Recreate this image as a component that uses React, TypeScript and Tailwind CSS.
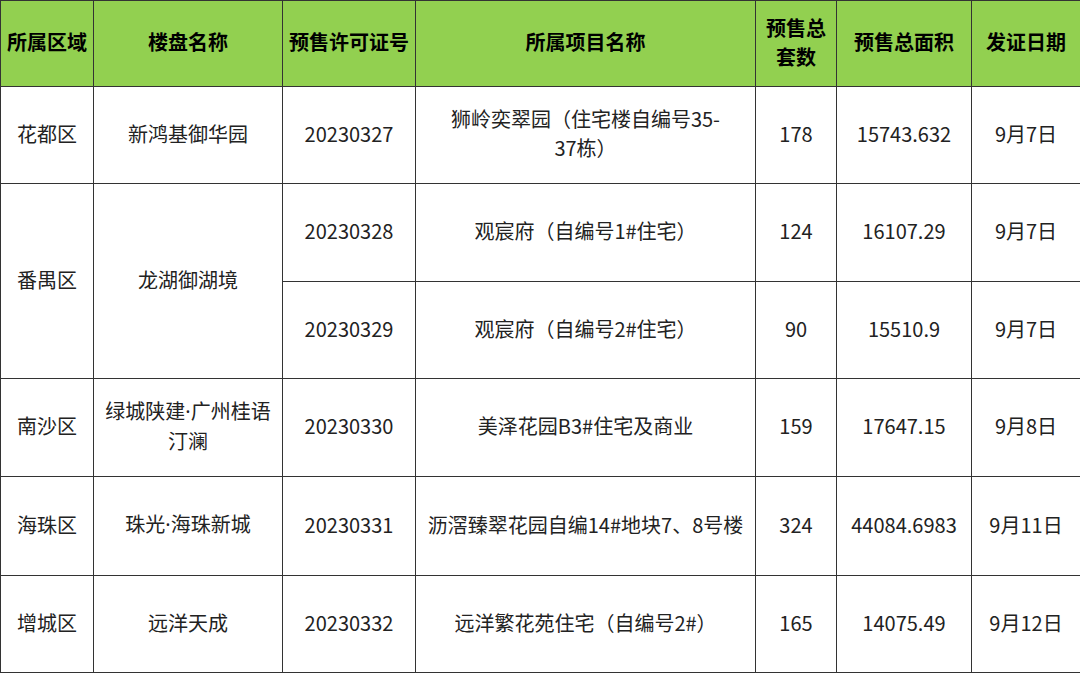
import React from 'react';

const headers: React.ReactNode[] = [
  '所属区域',
  '楼盘名称',
  '预售许可证号',
  '所属项目名称',
  <>预售总<br />套数</>,
  '预售总面积',
  '发证日期',
];

const widths = ['w-[93px]', 'w-[189px]', 'w-[133px]', 'w-[340px]', 'w-[81px]', 'w-[135px]', 'w-[109px]'];

const cell = 'border border-[#333] text-center align-middle px-1 pb-[4px] leading-[29px]';

const Dot = () => <span className="font-['Noto_Sans',sans-serif]">·</span>;

export default function App() {
  return (
    <div className="w-[1080px] h-[673px] bg-white overflow-hidden font-['Noto_Sans_CJK_SC','Noto_Sans',sans-serif] text-[20px] text-[#222]">
      <table className="table-fixed border-collapse w-[1081px]">
        <colgroup>
          {widths.map((w, i) => (
            <col key={i} className={w} />
          ))}
        </colgroup>
        <thead>
          <tr className="h-[86px] bg-[#92d050]">
            {headers.map((h, i) => (
              <th key={i} className={`${cell} font-bold text-black`}>
                {h}
              </th>
            ))}
          </tr>
        </thead>
        <tbody>
          <tr className="h-[97px]">
            <td className={cell}>花都区</td>
            <td className={cell}>新鸿基御华园</td>
            <td className={cell}>20230327</td>
            <td className={cell}>狮岭奕翠园（住宅楼自编号35-<br />37栋）</td>
            <td className={cell}>178</td>
            <td className={cell}>15743.632</td>
            <td className={cell}>9月7日</td>
          </tr>
          <tr className="h-[98px]">
            <td className={cell} rowSpan={2}>番禺区</td>
            <td className={cell} rowSpan={2}>龙湖御湖境</td>
            <td className={cell}>20230328</td>
            <td className={cell}>观宸府（自编号1#住宅）</td>
            <td className={cell}>124</td>
            <td className={cell}>16107.29</td>
            <td className={cell}>9月7日</td>
          </tr>
          <tr className="h-[97px]">
            <td className={cell}>20230329</td>
            <td className={cell}>观宸府（自编号2#住宅）</td>
            <td className={cell}>90</td>
            <td className={cell}>15510.9</td>
            <td className={cell}>9月7日</td>
          </tr>
          <tr className="h-[98px]">
            <td className={cell}>南沙区</td>
            <td className={cell}>绿城陕建<Dot />广州桂语<br />汀澜</td>
            <td className={cell}>20230330</td>
            <td className={cell}>美泽花园B3#住宅及商业</td>
            <td className={cell}>159</td>
            <td className={cell}>17647.15</td>
            <td className={cell}>9月8日</td>
          </tr>
          <tr className="h-[99px]">
            <td className={cell}>海珠区</td>
            <td className={cell}>珠光<Dot />海珠新城</td>
            <td className={cell}>20230331</td>
            <td className={cell}>沥滘臻翠花园自编14#地块7、8号楼</td>
            <td className={cell}>324</td>
            <td className={cell}>44084.6983</td>
            <td className={cell}>9月11日</td>
          </tr>
          <tr className="h-[97px]">
            <td className={cell}>增城区</td>
            <td className={cell}>远洋天成</td>
            <td className={cell}>20230332</td>
            <td className={cell}>远洋繁花苑住宅（自编号2#）</td>
            <td className={cell}>165</td>
            <td className={cell}>14075.49</td>
            <td className={cell}>9月12日</td>
          </tr>
        </tbody>
      </table>
    </div>
  );
}
